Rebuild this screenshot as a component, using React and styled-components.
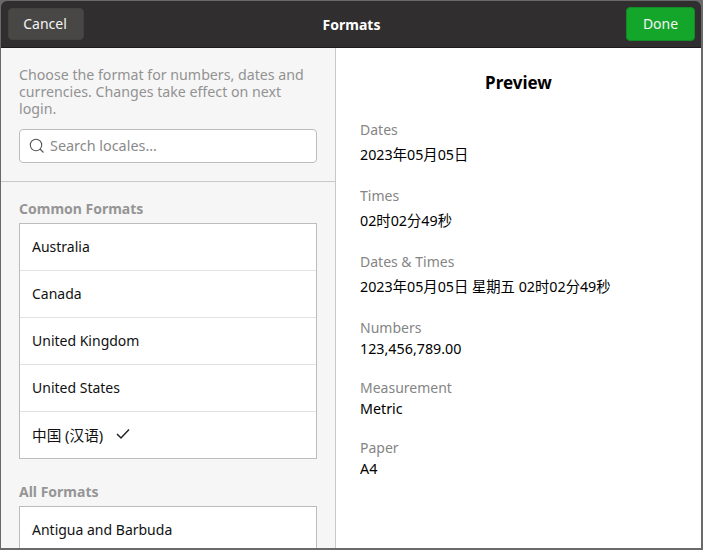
import React from 'react'
import styled, { createGlobalStyle } from 'styled-components'

const Global = createGlobalStyle`
  html, body { margin: 0; padding: 0; background: #6a6a6a; }
  body { width: 703px; height: 550px; overflow: hidden; }
  * { box-sizing: border-box; }
`

const Dialog = styled.div`
  width: 703px;
  height: 550px;
  display: flex;
  flex-direction: column;
  padding: 1px 2px 2px 1px;
  overflow: hidden;
  font-family: "Noto Sans", "Noto Sans CJK SC", sans-serif;
  font-size: 14px;
  color: #111;
`
const HeaderBar = styled.header`
  height: 47px;
  flex: none;
  display: grid;
  grid-template-columns: 1fr auto 1fr;
  align-items: center;
  padding: 0 6px 0 7px;
  background: #302e2e;
  border-bottom: 1px solid #1d1c1c;
  border-radius: 6px 6px 0 0;
`
const Button = styled.button`
  height: ${p => (p.$done ? 34 : 32)}px;
  width: ${p => (p.$done ? 69 : 76)}px;
  justify-self: ${p => (p.$done ? 'end' : 'start')};
  padding: 0 ${p => (p.$done ? 0 : 2)}px 1px 0;
  border: 1px solid ${p => (p.$done ? '#118c26' : '#444240')};
  border-radius: 4px;
  background: ${p => (p.$done ? '#14a52b' : '#494745')};
  color: #f4f4f4;
  font: 14px "Noto Sans", sans-serif;
`
const Title = styled.h1`
  margin: 0;
  color: #fff;
  font-size: 14px;
  font-weight: 700;
`
const Body = styled.div`
  flex: 1;
  min-height: 0;
  display: flex;
`
const Sidebar = styled.aside`
  width: 335px;
  flex: none;
  background: #f6f6f6;
  border-right: 1px solid #c9c9c9;
  overflow: hidden;
`
const Intro = styled.div`
  padding: 18px 18px 18px;
  border-bottom: 1px solid #c9c9c9;
`
const Hint = styled.p`
  margin: 0 0 12px;
  color: #929292;
  font-size: 14.2px;
  line-height: 17px;
`
const SearchBox = styled.div`
  height: 34px;
  display: flex;
  align-items: center;
  gap: 5px;
  padding: 0 8px 1px 9px;
  background: #fff;
  border: 1px solid #bdbdbd;
  border-radius: 4px;
  color: #8a8a8a;
  font-size: 14.4px;
`
const Lists = styled.div`
  padding: 18px 18px 0;
`
const SectionTitle = styled.h2`
  margin: 0 0 6px;
  color: #959595;
  font-size: 14px;
  line-height: 17px;
  font-weight: 700;
`
const List = styled.ul`
  margin: 0 0 24px;
  padding: 0;
  list-style: none;
  background: #fff;
  border: 1px solid #bdbdbd;
`
const Row = styled.li`
  height: 47px;
  display: flex;
  align-items: center;
  gap: 12px;
  padding: 0 12px 2px;
  border-bottom: 1px solid #e2e2e2;
  &:last-child {
    height: 46px;
    border-bottom: 0;
  }
`
const CjkLabel = styled.span`
  font-size: 14.67px;
`
const Preview = styled.main`
  flex: 1;
  background: #fff;
  padding: 24px 24px 0;
`
const PreviewTitle = styled.h2`
  margin: 0 0 28px;
  text-align: center;
  font-size: 17px;
  line-height: 21px;
  font-weight: 700;
  color: #000;
`
const Field = styled.div`
  margin-bottom: ${p => p.$gap}px;
`
const FieldLabel = styled.div`
  color: #858585;
  line-height: 17px;
  margin-bottom: ${p => p.$gap}px;
`
const FieldValue = styled.div`
  color: #000;
  font-size: 14.3px;
  line-height: 17px;
`

const SearchIcon = () => (
  <svg width="16" height="16" viewBox="0 0 16 16" fill="none" stroke="#555" strokeWidth="1.1">
    <circle cx="7" cy="7" r="5.7" />
    <path d="M11 11l3.5 3.5" />
  </svg>
)

const CheckIcon = () => (
  <svg width="16" height="16" viewBox="0 0 16 16" fill="none" stroke="#222" strokeWidth="1.5">
    <path d="M2 8l4 4 8-8.5" />
  </svg>
)

const common = ['Australia', 'Canada', 'United Kingdom', 'United States']

const fields = [
  { label: 'Dates', value: '2023年05月05日', inner: 8, gap: 24 },
  { label: 'Times', value: '02时02分49秒', inner: 8, gap: 24 },
  { label: 'Dates & Times', value: '2023年05月05日 星期五 02时02分49秒', inner: 8, gap: 24 },
  { label: 'Numbers', value: '123,456,789.00', inner: 4, gap: 22 },
  { label: 'Measurement', value: 'Metric', inner: 4, gap: 22 },
  { label: 'Paper', value: 'A4', inner: 4, gap: 0 },
]

export default function App() {
  return (
    <Dialog>
      <Global />
      <HeaderBar>
        <Button>Cancel</Button>
        <Title>Formats</Title>
        <Button $done>Done</Button>
      </HeaderBar>
      <Body>
        <Sidebar>
          <Intro>
            <Hint>Choose the format for numbers, dates and currencies. Changes take effect on next login.</Hint>
            <SearchBox>
              <SearchIcon />
              Search locales...
            </SearchBox>
          </Intro>
          <Lists>
            <SectionTitle>Common Formats</SectionTitle>
            <List>
              {common.map(name => <Row key={name}>{name}</Row>)}
              <Row><CjkLabel>中国 (汉语)</CjkLabel><CheckIcon /></Row>
            </List>
            <SectionTitle>All Formats</SectionTitle>
            <List>
              <Row>Antigua and Barbuda</Row>
            </List>
          </Lists>
        </Sidebar>
        <Preview>
          <PreviewTitle>Preview</PreviewTitle>
          {fields.map(f => (
            <Field key={f.label} $gap={f.gap}>
              <FieldLabel $gap={f.inner}>{f.label}</FieldLabel>
              <FieldValue>{f.value}</FieldValue>
            </Field>
          ))}
        </Preview>
      </Body>
    </Dialog>
  )
}
